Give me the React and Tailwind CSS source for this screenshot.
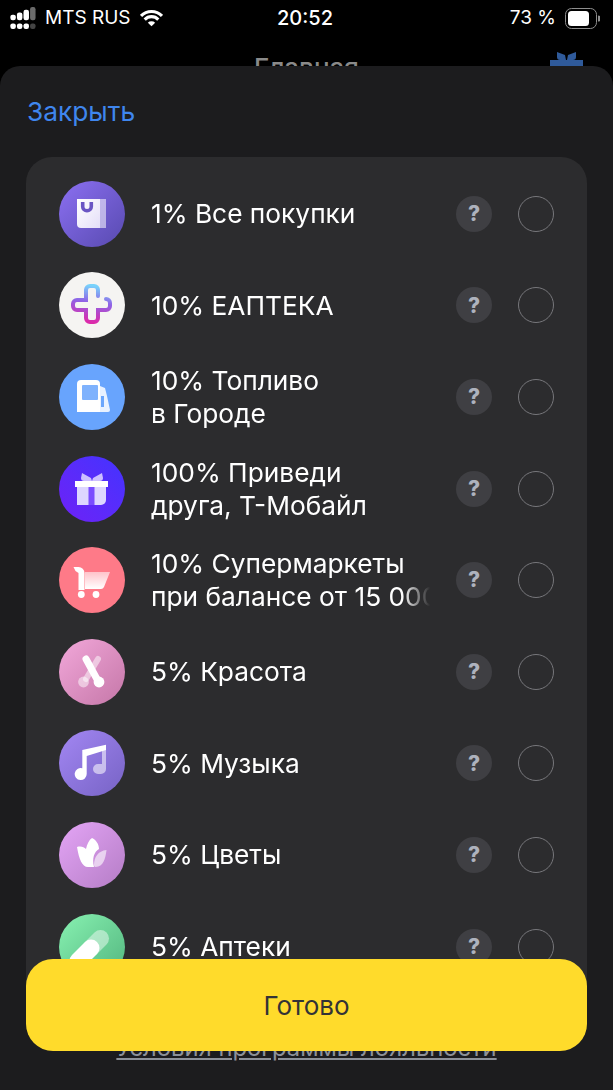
const font = "font-['Inter','Noto_Sans',sans-serif]"

function BagIcon() {
  return (
    <svg width="66" height="66" viewBox="0 0 66 66">
      <defs>
        <linearGradient id="bagFront" x1="0" y1="0" x2="1" y2="1">
          <stop offset="0" stopColor="#ffffff" />
          <stop offset="1" stopColor="#e4def8" />
        </linearGradient>
      </defs>
      <path d="M18 18h23v29H22a4 4 0 0 1-4-4z" fill="url(#bagFront)" />
      <rect x="41" y="18" width="6" height="29" fill="#fff" fillOpacity=".55" />
      <path d="M23.700 21v4.500a4.300 4.300 0 0 0 8.600 0V21" fill="none" stroke="#6a55c4" strokeWidth="3.600" />
    </svg>
  )
}

function PlusIcon() {
  return (
    <svg width="66" height="66" viewBox="0 0 66 66">
      <defs>
        <linearGradient id="plusStroke" x1="0.6" y1="0" x2="0.45" y2="1">
          <stop offset="0" stopColor="#79d3fb" />
          <stop offset="0.45" stopColor="#8f63e6" />
          <stop offset="1" stopColor="#dc2aaa" />
        </linearGradient>
      </defs>
      <path
        d="M39 24V18a4 4 0 0 0-4-4h-4a4 4 0 0 0-4 4v10h-9a4 4 0 0 0-4 4v2a4 4 0 0 0 4 4h9v8a4 4 0 0 0 4 4h4a4 4 0 0 0 4-4v-8h8a4 4 0 0 0 4-4v-3a4 4 0 0 0-4-4"
        fill="none"
        stroke="url(#plusStroke)"
        strokeWidth="4"
        strokeLinecap="round"
      />
    </svg>
  )
}

function FuelIcon() {
  return (
    <svg width="66" height="66" viewBox="0 0 66 66">
      <path d="M18 20a4 4 0 0 1 4-4h15a4 4 0 0 1 4 4v28H18z" fill="#fff" />
      <rect x="23" y="21" width="16" height="15" rx="1" fill="#7fb2fd" />
      <path d="M41 22l5 2 2 8 3 14a2 2 0 0 1-2 2h-8z" fill="#fff" fillOpacity=".85" />
      <rect x="42" y="32" width="3" height="11" fill="#6aa5fc" />
    </svg>
  )
}

function GiftIcon() {
  return (
    <svg width="66" height="66" viewBox="0 0 66 66">
      <path d="M23 17l9 5 1 3h-8a3 3 0 0 1-3-3zM43 17l-9 5-1 3h8a3 3 0 0 0 3-3z" fill="#cdbfff" />
      <path d="M18 31h29v13a5 5 0 0 1-5 5H18z" fill="#ddd6ff" />
      <rect x="29.5" y="31" width="6" height="18" fill="#7a4dff" />
      <rect x="16" y="25" width="33" height="6" fill="#fff" />
    </svg>
  )
}

function CartIcon() {
  return (
    <svg width="66" height="66" viewBox="0 0 66 66">
      <defs>
        <linearGradient id="cartBasket" x1="0" y1="0" x2="0" y2="1">
          <stop offset="0" stopColor="#ffc3ca" />
          <stop offset="1" stopColor="#fff" />
        </linearGradient>
      </defs>
      <path d="M26 25h25l-6 15a4 4 0 0 1-3 2H26z" fill="url(#cartBasket)" />
      <path d="M14.5 20h5a6 6 0 0 1 6 6v17h-6V26l-3-2z" fill="#fff" />
      <circle cx="22.3" cy="47.5" r="3.4" fill="#fff" />
      <circle cx="37" cy="47.5" r="3.4" fill="#fff" />
    </svg>
  )
}

function ScissorsIcon() {
  return (
    <svg width="66" height="66" viewBox="0 0 66 66">
      <path d="M39 20L27 40" stroke="#fff" strokeOpacity=".5" strokeWidth="6" strokeLinecap="round" />
      <circle cx="24.5" cy="43" r="5.4" fill="#fff" fillOpacity=".5" />
      <path d="M27 20L39 42" stroke="#fff" strokeWidth="7" strokeLinecap="round" />
      <circle cx="40" cy="43" r="5.4" fill="#fff" />
    </svg>
  )
}

function MusicIcon() {
  return (
    <svg width="66" height="66" viewBox="0 0 66 66">
      <path d="M47 20v19a5 5 0 0 1-5 5h-3a5 5 0 0 1 0-10h4V20z" fill="#fff" fillOpacity=".55" />
      <path d="M23.3 20L47 14.7V20L27.7 26v18a6 6 0 1 1-4.4-5.7z" fill="#fff" />
    </svg>
  )
}

function FlowerIcon() {
  return (
    <svg width="66" height="66" viewBox="0 0 66 66">
      <path d="M47.5 28c-1 8-3 17-11 17-1 0-1.500-1-1.500-2 0-8 4-14 12.500-15z" fill="#fff" fillOpacity=".6" />
      <path d="M18 25c4-1 7 0 9 2 1-5 3-9 6-11 4 2 7 6 7 11-5 3-7 9-5 18h-6c-6 0-9-8-11-20z" fill="#fff" />
    </svg>
  )
}

function PillIcon() {
  return (
    <svg width="66" height="66" viewBox="0 0 66 66">
      <path d="M41.500 24.500L32 34" stroke="#fff" strokeOpacity=".45" strokeWidth="17" strokeLinecap="round" />
      <path d="M32 34L19 47" stroke="#fff" strokeWidth="17" strokeLinecap="round" />
    </svg>
  )
}

const rows = [
  { lines: ['1% Все покупки'], bg: 'bg-linear-to-br from-[#8c70f2] to-[#584ab0]', Icon: BagIcon },
  { lines: ['10% ЕАПТЕКА'], bg: 'bg-[#f5f4f2]', Icon: PlusIcon },
  { lines: ['10% Топливо', 'в Городе'], bg: 'bg-[#68a4fd]', Icon: FuelIcon },
  { lines: ['100% Приведи', 'друга, Т-Мобайл'], bg: 'bg-linear-to-tr from-[#6d20f6] to-[#4233ff]', Icon: GiftIcon },
  { lines: ['10% Супермаркеты', 'при балансе от 15 000'], bg: 'bg-[#fe7a88]', Icon: CartIcon },
  { lines: ['5% Красота'], bg: 'bg-linear-to-br from-[#f2a8da] to-[#c577a8]', Icon: ScissorsIcon },
  { lines: ['5% Музыка'], bg: 'bg-linear-to-br from-[#a387f3] to-[#7763c5]', Icon: MusicIcon },
  { lines: ['5% Цветы'], bg: 'bg-linear-to-br from-[#e4a5f6] to-[#b57dc6]', Icon: FlowerIcon },
  { lines: ['5% Аптеки'], bg: 'bg-linear-to-br from-[#88f2b2] to-[#52b57e]', Icon: PillIcon },
]

function Row({ lines, bg, Icon }) {
  return (
    <div className="h-[91.6px] flex items-center pl-[33px] pr-[32px]">
      <div className={`w-[66px] h-[66px] flex-none rounded-full ${bg}`}>
        <Icon />
      </div>
      <div className="w-[279px] ml-[26px] overflow-hidden whitespace-nowrap text-[26.3px] leading-[33px] text-white [mask-image:linear-gradient(to_right,black_90%,transparent)]">
        {lines.map((l) => (
          <div key={l}>{l}</div>
        ))}
      </div>
      <div className="w-[36px] h-[36px] flex-none ml-[26px] rounded-full bg-[#3f3f43] flex items-center justify-center text-[21px] font-extrabold text-[#aeb2bd]">
        ?
      </div>
      <div className="w-[36px] h-[36px] flex-none ml-[26px] rounded-full border-[1.5px] border-[#77777b]" />
    </div>
  )
}

function StatusBar() {
  return (
    <div className="h-[50px] flex items-start justify-between pl-[10px] pr-[13px] pt-[6px] text-white text-[19px] leading-[24px]">
      <div className="flex items-center w-[200px]">
        <svg width="27" height="23" viewBox="0 0 24 21" fill="#fff">
          <rect x="0" y="7" width="5" height="5" rx="2" />
          <rect x="6" y="5" width="5" height="7" rx="2" />
          <rect x="12" y="2.500" width="5" height="9.500" rx="2" />
          <rect x="18" y="0" width="5" height="12" rx="2" fill="#6b6b6b" />
          <rect x="0" y="15" width="5" height="5" rx="2" />
          <rect x="6" y="15" width="5" height="5" rx="2" />
          <rect x="12" y="15" width="5" height="5" rx="2" />
          <rect x="18" y="15" width="5" height="5" rx="2" fill="#444" />
        </svg>
        <span className="ml-[8px]">MTS RUS</span>
        <svg className="ml-[9px]" width="23" height="18" viewBox="0 0 22 17" fill="none" stroke="#fff" strokeWidth="3">
          <path d="M1 6.500a14 14 0 0 1 20 0" />
          <path d="M4.500 10a9 9 0 0 1 13 0" />
          <path d="M11 16.500L7.500 13a5 5 0 0 1 7 0z" fill="#fff" strokeWidth="0" />
        </svg>
      </div>
      <span className="font-medium text-[20px]">20:52</span>
      <div className="flex items-center justify-end w-[200px]">
        <span>73 %</span>
        <svg className="ml-[9px]" width="35" height="21" viewBox="0 0 35 21" fill="none">
          <rect x="0.500" y="0.500" width="31" height="20" rx="6" stroke="#8e8e8e" />
          <rect x="3" y="3" width="21" height="15" rx="3.500" fill="#fff" />
          <path d="M33 7.500v6a3 3 0 0 0 0-6z" fill="#8e8e8e" />
        </svg>
      </div>
    </div>
  )
}

export default function App() {
  return (
    <div className={`w-[613px] h-[1090px] bg-black overflow-hidden flex flex-col ${font}`}>
      <StatusBar />

      {/* шапка главного экрана, почти закрыта шторкой */}
      <div className="h-[16px] flex-none overflow-hidden relative">
        <div className="pt-[2px] text-center text-[26px] leading-[32px] font-medium text-[#8a8a8a]">Главная</div>
        <svg className="absolute right-[30px] top-[2px]" width="33" height="14" viewBox="0 0 33 14" fill="#2f5a9a">
          <path d="M7 0l8 3 1 5H10a3 3 0 0 1-3-3zM26 0l-8 3-1 5h6a3 3 0 0 0 3-3z" />
          <rect x="0" y="8" width="33" height="6" />
        </svg>
      </div>

      <div className="flex-1 relative bg-[#1c1c1e] rounded-t-[20px]">
        <div className="pt-[29px] pl-[27px] text-[26.3px] leading-[34px] text-[#3f86ee]">Закрыть</div>

        <div className="mt-[28px] mx-[26px] pt-[11px] h-[850px] bg-[#2c2c2e] rounded-t-[26px] overflow-hidden">
          {rows.map((r) => (
            <Row key={r.lines[0]} {...r} />
          ))}
        </div>

        <div className="mt-[26px] text-center text-[23.8px] leading-[30px] text-[#8d9199] underline">
          Условия программы лояльности
        </div>

        <button
          type="button"
          className="absolute left-[26px] right-[26px] top-[893px] h-[92px] rounded-[27px] bg-[#ffdb2b] text-[26px] text-[#333336]"
        >
          Готово
        </button>
      </div>
    </div>
  )
}
